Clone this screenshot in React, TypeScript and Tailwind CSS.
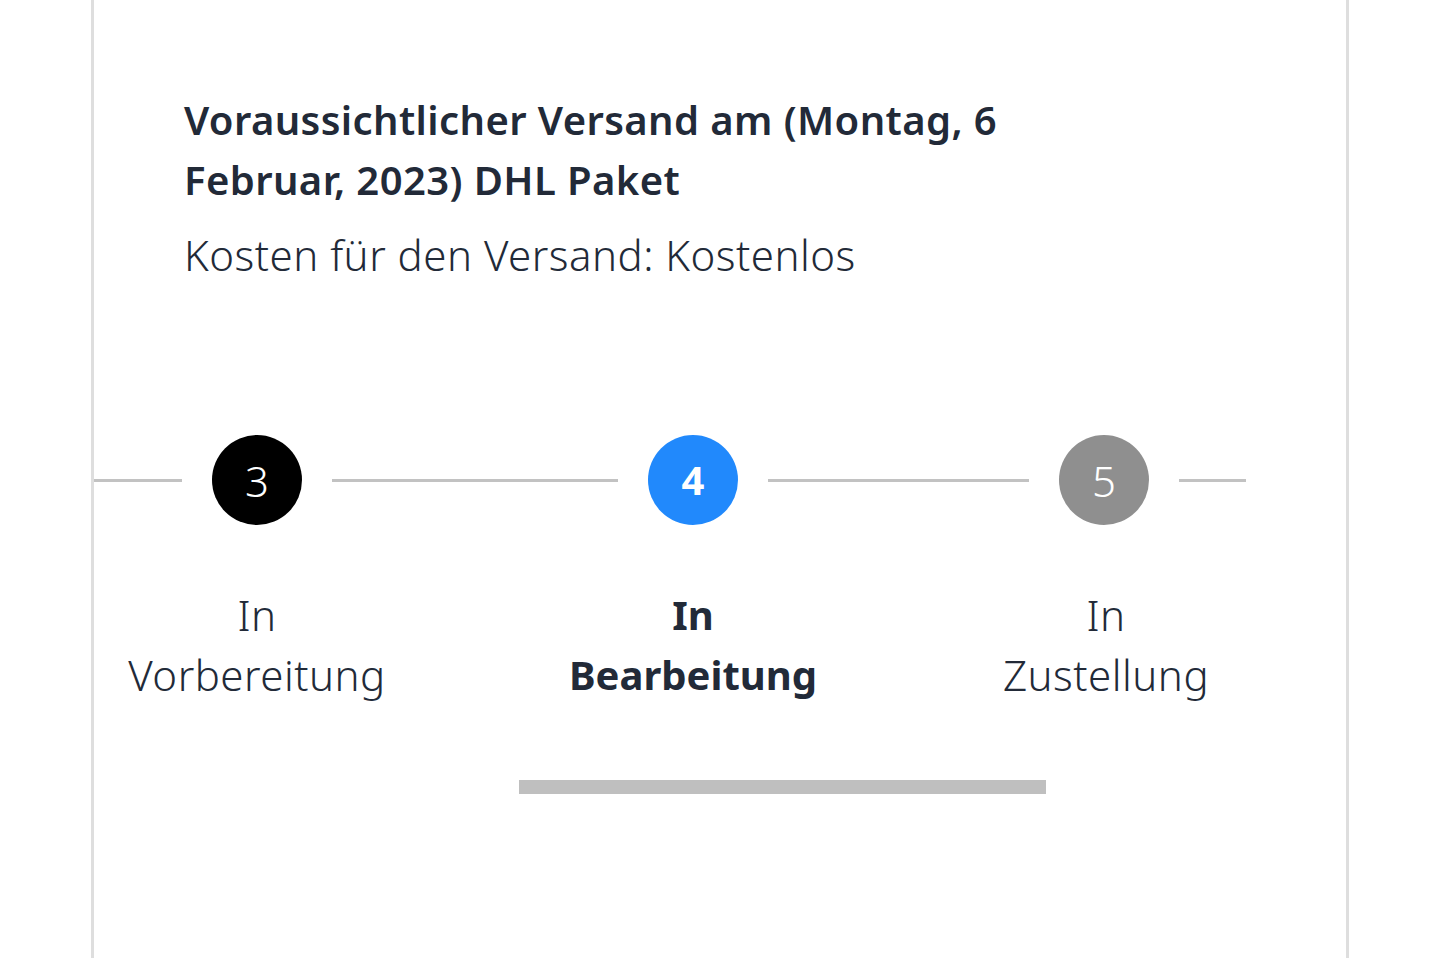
import React from 'react';

type Step = {
  num: number;
  label: [string, string];
  circle: string;
  bold?: boolean;
  left: string;
  right: string;
};

const steps: Step[] = [
  { num: 3, label: ['In', 'Vorbereitung'], circle: 'bg-black', left: 'w-[88px]', right: 'w-[88px]' },
  { num: 4, label: ['In', 'Bearbeitung'], circle: 'bg-[#2189fc]', bold: true, left: 'w-[198px]', right: 'w-[198px]' },
  { num: 5, label: ['In', 'Zustellung'], circle: 'bg-[#8f8f8f]', left: 'w-[63px]', right: 'w-[67px]' },
];

const App: React.FC = () => {
  return (
    <div
      className="min-h-[958px] bg-white text-[#222a38]"
      style={{ fontFamily: '"Noto Sans", Lato, sans-serif' }}
    >
      <div className="ml-[91px] w-[1258px] min-h-[958px] border-x-[3px] border-[#dedede] pt-[90px]">
        <div className="pl-[90px]">
          <h2 className="w-[860px] text-[40px] leading-[60px] font-semibold tracking-[0.4px]">
            Voraussichtlicher Versand am (Montag, 6 Februar, 2023) DHL Paket
          </h2>
          <p className="mt-[15px] text-[42px] leading-[60px] font-light tracking-[0.5px]">
            Kosten für den Versand: Kostenlos
          </p>
        </div>

        <div className="mt-[150px] flex">
          {steps.map((s) => (
            <div key={s.num} className="flex flex-col items-center">
              <div className="flex items-center gap-[30px]">
                <div className={`${s.left} h-[3px] bg-[#c2c2c2]`} />
                <div
                  className={`${s.circle} w-[90px] h-[90px] rounded-full flex items-center justify-center text-white ${s.bold ? 'text-[40px] font-bold' : 'text-[42px] font-light'}`}
                >
                  {s.num}
                </div>
                <div className={`${s.right} h-[3px] bg-[#c2c2c2]`} />
              </div>
              <div
                className={`mt-[60px] text-center leading-[60px] ${s.bold ? 'text-[40px] font-bold' : 'text-[42px] font-light tracking-[0.5px]'}`}
              >
                <div>{s.label[0]}</div>
                <div>{s.label[1]}</div>
              </div>
            </div>
          ))}
        </div>

        <div className="mt-[75px] ml-[425px] w-[527px] h-[14px] bg-[#bfbfbf]" />
      </div>
    </div>
  );
};

export default App;
